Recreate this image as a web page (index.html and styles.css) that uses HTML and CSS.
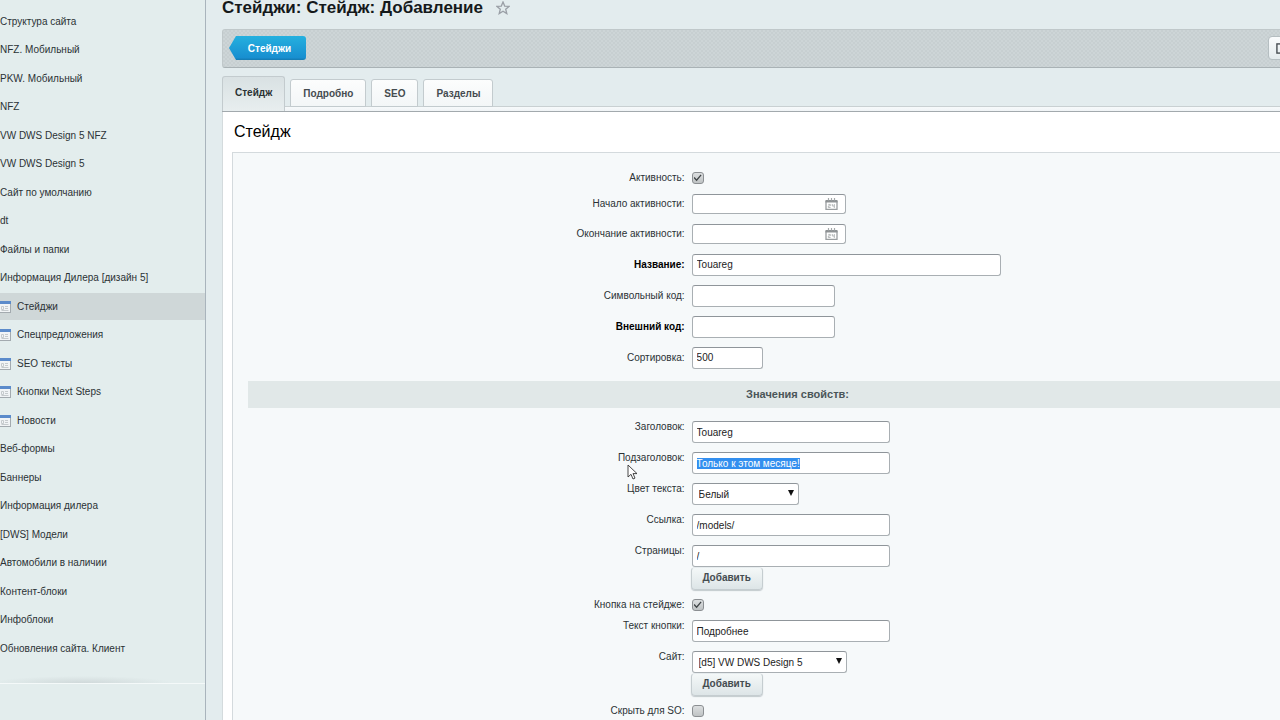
FILE: index.html
```html
<!DOCTYPE html>
<html lang="ru">
<head>
<meta charset="utf-8">
<title>Стейджи: Стейдж: Добавление</title>
<link rel="stylesheet" href="styles.css">
</head>
<body>
<svg class="sprite" aria-hidden="true">
  <symbol id="list-icon" viewBox="0 0 11 12">
    <rect x="-2" y="1.5" width="12.500" height="10" fill="#f1f4f6" stroke="#a3aaaf"/>
    <rect x="-2" y="0" width="13" height="3" fill="#5b8bcb"/>
    <path d="M1.500 5.500h2v3h-2zM5 5.500h3M5 7.500h3M1.500 9.500h7" fill="none" stroke="#c5cacd"/>
  </symbol>
  <symbol id="calendar-icon" viewBox="0 0 13 12">
    <path d="M1 3v8.300h11V3" fill="#fff" stroke="#9a9ea0" stroke-width="1.300"/>
    <path d="M.5 2h12v2.500H.5z" fill="#8e9294"/>
    <path d="M3.500 0v2.500M6.500 0v2.500M9.500 0v2.500" stroke="#a4a8aa" stroke-width="1.200"/>
    <path d="M3.300 6.400h2v1.500h-2v1.600h2.300M7.300 6v2h2.200M9.300 6v4" fill="none" stroke="#a4a8aa" stroke-width=".8"/>
  </symbol>
</svg>
<div class="shell">
  <nav class="sidebar">
    <ul class="menu">
      <li><a href="#">Структура сайта</a></li>
      <li><a href="#">NFZ. Мобильный</a></li>
      <li><a href="#">PKW. Мобильный</a></li>
      <li><a href="#">NFZ</a></li>
      <li><a href="#">VW DWS Design 5 NFZ</a></li>
      <li><a href="#">VW DWS Design 5</a></li>
      <li><a href="#">Сайт по умолчанию</a></li>
      <li><a href="#">dt</a></li>
      <li><a href="#">Файлы и папки</a></li>
      <li><a href="#">Информация Дилера [дизайн 5]</a></li>
      <li><a href="#" class="current"><svg class="list-icon"><use href="#list-icon"/></svg>Стейджи</a></li>
      <li><a href="#"><svg class="list-icon"><use href="#list-icon"/></svg>Спецпредложения</a></li>
      <li><a href="#"><svg class="list-icon"><use href="#list-icon"/></svg>SEO тексты</a></li>
      <li><a href="#"><svg class="list-icon"><use href="#list-icon"/></svg>Кнопки Next Steps</a></li>
      <li><a href="#"><svg class="list-icon"><use href="#list-icon"/></svg>Новости</a></li>
      <li><a href="#">Веб-формы</a></li>
      <li><a href="#">Баннеры</a></li>
      <li><a href="#">Информация дилера</a></li>
      <li><a href="#">[DWS] Модели</a></li>
      <li><a href="#">Автомобили в наличии</a></li>
      <li><a href="#">Контент-блоки</a></li>
      <li><a href="#">Инфоблоки</a></li>
      <li><a href="#">Обновления сайта. Клиент</a></li>
    </ul>
    <div class="menu-end"></div>
  </nav>
  <main class="main">
    <header class="heading">
      <h1>Стейджи: Стейдж: Добавление</h1>
      <button class="star" type="button" aria-label="В избранное">
        <svg viewBox="0 0 14 14"><path d="M7 1l1.700 4.100 4.300.3-3.300 2.800 1.100 4.400L7 10.200l-3.800 2.400 1.100-4.400L1 5.400l4.300-.3z" fill="none" stroke="#9a9fa6" stroke-width="1.300"/></svg>
      </button>
    </header>
    <div class="toolbar">
      <a class="back" href="#"><span>Стейджи</span></a>
      <button class="tool" type="button" aria-label="Действия"><svg viewBox="0 0 12 12"><rect x="1" y="1" width="10" height="10" fill="none" stroke="#454b50" stroke-width="1.500"/></svg></button>
    </div>
    <div class="tabs" role="tablist">
      <button type="button" role="tab" class="tab active" aria-selected="true">Стейдж</button>
      <button type="button" role="tab" class="tab">Подробно</button>
      <button type="button" role="tab" class="tab">SEO</button>
      <button type="button" role="tab" class="tab">Разделы</button>
    </div>
    <section class="panel">
      <h2>Стейдж</h2>
      <form class="form">
        <div class="row check"><label for="active">Активность:</label><div class="field"><input type="checkbox" id="active" checked></div></div>
        <div class="row date"><label for="from">Начало активности:</label><div class="field"><div class="date-box"><input type="text" id="from"><svg class="calendar"><use href="#calendar-icon"/></svg></div></div></div>
        <div class="row date"><label for="to">Окончание активности:</label><div class="field"><div class="date-box"><input type="text" id="to"><svg class="calendar"><use href="#calendar-icon"/></svg></div></div></div>
        <div class="row"><label for="name" class="required">Название:</label><div class="field"><input type="text" id="name" class="wide" value="Touareg"></div></div>
        <div class="row"><label for="code">Символьный код:</label><div class="field"><input type="text" id="code" class="short"></div></div>
        <div class="row"><label for="xml" class="required">Внешний код:</label><div class="field"><input type="text" id="xml" class="short"></div></div>
        <div class="row"><label for="sort">Сортировка:</label><div class="field"><input type="text" id="sort" class="tiny" value="500"></div></div>
        <h3>Значения свойств:</h3>
        <div class="row prop"><label for="title">Заголовок:</label><div class="field"><input type="text" id="title" value="Touareg"></div></div>
        <div class="row prop"><label for="subtitle">Подзаголовок:<svg class="pointer" viewBox="0 0 11 16" aria-hidden="true"><path d="M1 1v12l3-2.700 2 4.700 2-.9-2-4.500h4z" fill="#fff" stroke="#333" stroke-width=".9"/></svg></label><div class="field"><input type="text" id="subtitle" value="Только к этом месяце!"></div></div>
        <div class="row prop"><label for="color">Цвет текста:</label><div class="field"><span class="select-box color"><select id="color"><option>Белый</option></select></span></div></div>
        <div class="row prop"><label for="link">Ссылка:</label><div class="field"><input type="text" id="link" value="/models/"></div></div>
        <div class="row prop"><label for="pages">Страницы:</label><div class="field"><input type="text" id="pages" value="/"><button type="button" class="add">Добавить</button></div></div>
        <div class="row check"><label for="button">Кнопка на стейдже:</label><div class="field"><input type="checkbox" id="button" checked></div></div>
        <div class="row prop"><label for="caption">Текст кнопки:</label><div class="field"><input type="text" id="caption" value="Подробнее"></div></div>
        <div class="row prop"><label for="site">Сайт:</label><div class="field"><span class="select-box site"><select id="site"><option>[d5] VW DWS Design 5</option></select></span><button type="button" class="add">Добавить</button></div></div>
        <div class="row check"><label for="hide">Скрыть для SO:</label><div class="field"><input type="checkbox" id="hide"></div></div>
      </form>
    </section>
  </main>
</div>
<script src="script.js"></script>
</body>
</html>
```
FILE: styles.css
```css
* { box-sizing: border-box; }
body {
  margin: 0;
  background: #e3ecee;
  color: #2b3235;
  font-family: "Liberation Sans", Arial, sans-serif;
  font-size: 10px;
}
button, input, select { font: inherit; color: inherit; margin: 0; }
.sprite { display: none; }
.shell { display: flex; height: 100vh; overflow: hidden; }

.sidebar {
  flex: none;
  width: 206px;
  border-right: 1px solid #a9b4bc;
  background: #e3eded;
}
.menu { list-style: none; margin: 0; padding: 8px 0 0; }
.menu li { height: 28px; padding-bottom: 1px; display: flex; }
.menu li:nth-child(even) { height: 29px; padding-bottom: 2px; }
.menu a {
  flex: 1;
  display: flex;
  align-items: center;
  color: #2b3235;
  text-decoration: none;
  white-space: nowrap;
}
.menu a.current { background: #cfd7d8; }
.list-icon { width: 11px; height: 12px; margin-right: 6px; flex: none; }
.menu-end {
  height: 21px;
  border-bottom: 1px solid #f4f9f9;
  background: radial-gradient(ellipse 90px 7px at 40% 100%, #d0d9da, transparent);
}

.main { flex: 1; min-width: 0; margin: 0 -94px 0 16px; }
.heading { display: flex; align-items: center; gap: 13px; height: 29px; padding-bottom: 14px; }
h1 { margin: 0; font-size: 17px; line-height: 15px; color: #15191b; white-space: nowrap; }
.star { border: 0; padding: 0; background: none; width: 14px; height: 14px; }
.star svg { display: block; width: 14px; height: 14px; }

.toolbar {
  display: flex;
  justify-content: space-between;
  align-items: center;
  height: 39px;
  padding: 0 8px 1px 6px;
  border: 1px solid #c0c8ca;
  border-bottom-color: #a9b2b5;
  border-radius: 3px;
  background: repeating-conic-gradient(#c7cfd1 0 25%, #cdd5d7 0 50%) 0 0 / 4px 4px;
}
.back {
  display: flex;
  align-items: center;
  justify-content: center;
  width: 77px;
  height: 24px;
  padding-left: 4px;
  border-radius: 3px;
  clip-path: polygon(0 50%, 7px 0, 100% 0, 100% 100%, 7px 100%);
  background: linear-gradient(#25b0df, #188fd0 90%, #1479b0);
  color: #fff;
  font-size: 10px;
  font-weight: bold;
  text-decoration: none;
}
.tool {
  width: 97px;
  height: 24px;
  padding: 0 0 0 7px;
  border: 1px solid #b5bec1;
  border-radius: 4px;
  background: linear-gradient(#fafcfd, #e4ebed);
  text-align: left;
}
.tool svg { display: block; width: 11px; height: 11px; }

.tabs {
  display: flex;
  gap: 5px;
  height: 44px;
  padding-top: 8px;
  border-bottom: 1px solid #a2a9ad;
  background: linear-gradient(#c9d0d2, #c9d0d2) 0 38px / 100% 1px no-repeat, linear-gradient(#f7fafb, #f0f4f6) 0 39px / 100% 4px no-repeat;
}
.tab {
  height: 28px;
  margin-top: 3px;
  padding: 0 12px;
  border: 1px solid #c3cbce;
  border-radius: 3px 3px 0 0;
  background: linear-gradient(#fcfdfd, #f3f6f7);
  color: #454c50;
  font-size: 10px;
  font-weight: bold;
}
.tab.active {
  height: 35px;
  margin-top: 0;
  padding: 0 12px 3px;
  border-bottom: 0;
  background: linear-gradient(#d9e1e3, #e8eeef);
  color: #2b3235;
}

.panel { padding: 0 10px 0 9px; border-left: 1px solid #d4dbdd; background: #fff; }
h2 { margin: 0; padding: 0 2px; font-size: 16px; line-height: 40px; font-weight: normal; color: #000; }
.form { padding: 14px 16px 20px 15px; border: 1px solid #d4dadd; border-bottom: 0; background: #f6f9fa; }
h3 {
  margin: 8px 0 9px;
  background: #e1e8e8;
  color: #4b5659;
  font-size: 11px;
  line-height: 27px;
  text-align: center;
}
.row { display: flex; min-height: 31px; padding: 4px 0; align-items: center; }
.row > label { position: relative; flex: none; width: 40%; padding-right: 3px; text-align: right; line-height: 14px; }
.row .required { color: #000; font-weight: bold; }
.row.prop { align-items: flex-start; }
.row.prop > label { line-height: 12px; }
.row.check { min-height: 22px; padding: 0; }
.row.date { min-height: 30px; }
.field { padding-left: 4px; display: flex; flex-direction: column; align-items: flex-start; }
input[type="text"], select {
  width: 198px;
  height: 22px;
  padding: 0 4px;
  border: 1px solid #a9afb3;
  border-top-color: #8f959a;
  border-radius: 3px;
  background: #fff;
  color: #222;
  outline: 0;
}
input[type="text"]::selection { background: #338fef; color: #fff; }
.date-box { position: relative; }
.date-box input[type="text"] { width: 154px; height: 20px; display: block; }
.calendar { position: absolute; right: 8px; top: 4px; width: 13px; height: 12px; }
input.wide[type="text"] { width: 309px; }
input.short[type="text"] { width: 143px; }
input.tiny[type="text"] { width: 71px; }
input[type="checkbox"] {
  appearance: none;
  width: 12px;
  height: 12px;
  border: 1px solid #8b8f92;
  border-radius: 3px;
  background: linear-gradient(#dcdfe0, #bfc3c4);
  display: grid;
  place-items: center;
}
input[type="checkbox"]:checked::after {
  content: "";
  width: 8px;
  height: 8px;
  background: #3f4446;
  clip-path: polygon(0 50%, 12% 38%, 37% 65%, 88% 5%, 100% 16%, 38% 92%);
}
.select-box { position: relative; display: block; }
.select-box select { appearance: none; width: 100%; padding: 0 6px; display: block; }
.select-box::after {
  content: "";
  position: absolute;
  right: 5px;
  top: 7px;
  border: solid transparent;
  border-width: 6px 3px 0;
  border-top-color: #111;
}
.color { width: 107px; }
.site { width: 155px; }
.add {
  width: 72px;
  height: 23px;
  margin-left: -1px;
  padding: 0 0 2px;
  border: 1px solid #c5cdd0;
  border-top-color: #e6ecee;
  border-radius: 4px;
  background: linear-gradient(#f4f8f8, #dde5e7);
  box-shadow: 0 1px 1px #c3cacd;
  color: #454c50;
  font-size: 10px;
  font-weight: bold;
}
.pointer { position: absolute; right: 50px; top: 12px; width: 11px; height: 16px; }
```
FILE: script.js
```js
const subtitle = document.getElementById("subtitle");
subtitle.focus({ preventScroll: true });
subtitle.select();
```
